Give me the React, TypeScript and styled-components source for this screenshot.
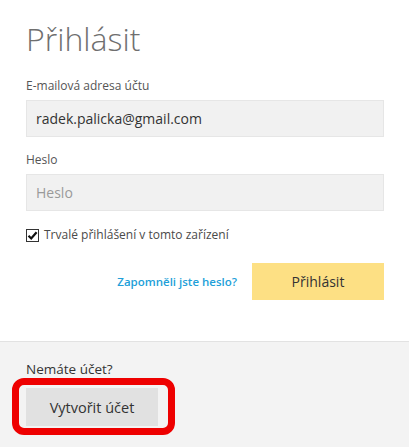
import styled, { createGlobalStyle } from 'styled-components';

const GlobalStyle = createGlobalStyle`
	html, body {
		margin: 0;
		padding: 0;
		background: #ffffff;
	}
	body {
		font-family: 'Open Sans', 'Noto Sans', sans-serif;
	}
`;

const CheckIcon = () => (
	<svg width="11" height="11" viewBox="0 0 11 11" aria-hidden="true">
		<path d="M1.5 5.8 L4.2 8.5 L9.6 2.2" fill="none" stroke="#111" strokeWidth="2.2" />
	</svg>
);

export default function App() {
	return (
		<Page>
			<GlobalStyle />
			<SignInSection>
				<Title>Přihlásit</Title>

				<Field $top={19}>
					<FieldLabel>E-mailová adresa účtu</FieldLabel>
					<TextInput type="email" defaultValue="radek.palicka@gmail.com" />
				</Field>

				<Field $top={15}>
					<FieldLabel>Heslo</FieldLabel>
					<TextInput type="password" placeholder="Heslo" />
				</Field>

				<RememberRow>
					<CheckBox>
						<CheckIcon />
					</CheckBox>
					<RememberText>Trvalé přihlášení v tomto zařízení</RememberText>
				</RememberRow>

				<ActionRow>
					<ForgotLink href="#">Zapomněli jste heslo?</ForgotLink>
					<PrimaryButton type="button">Přihlásit</PrimaryButton>
				</ActionRow>
			</SignInSection>

			<SignUpSection>
				<SignUpText>Nemáte účet?</SignUpText>
				<Highlight>
					<SecondaryButton type="button">Vytvořit účet</SecondaryButton>
					<HighlightRing />
				</Highlight>
			</SignUpSection>
		</Page>
	);
}

const Page = styled.div`
	width: 409px;
	height: 447px;
	display: flex;
	flex-direction: column;
	overflow: hidden;
`;

const SignInSection = styled.section`
	display: flex;
	flex-direction: column;
	padding: 19px 25px 41px 26px;
`;

const Title = styled.h1`
	margin: 0;
	font-size: 32px;
	line-height: 40px;
	font-weight: 300;
	color: #6f6f6f;
`;

const Field = styled.div<{ $top: number }>`
	display: flex;
	flex-direction: column;
	gap: 6px;
	margin-top: ${({ $top }) => $top}px;
`;

const FieldLabel = styled.label`
	font-size: 12px;
	line-height: 16px;
	color: #555555;
`;

const TextInput = styled.input`
	box-sizing: border-box;
	height: 37px;
	width: 100%;
	margin: 0;
	padding: 0 9px;
	border: 1px solid #e6e6e6;
	background: #f1f1f1;
	font-family: inherit;
	font-size: 14px;
	color: #333333;
	outline: none;

	&::placeholder {
		color: #9a9a9a;
	}
`;

const RememberRow = styled.div`
	display: flex;
	align-items: center;
	gap: 5px;
	margin-top: 17px;
	height: 14px;
`;

const CheckBox = styled.span`
	box-sizing: border-box;
	width: 13px;
	height: 13px;
	border: 1px solid #333333;
	background: #ffffff;
	display: flex;
	align-items: center;
	justify-content: center;
`;

const RememberText = styled.span`
	font-size: 12px;
	line-height: 14px;
	color: #4a4a4a;
`;

const ActionRow = styled.div`
	display: flex;
	justify-content: flex-end;
	align-items: center;
	gap: 15px;
	margin-top: 21px;
`;

const ForgotLink = styled.a`
	font-size: 11.5px;
	font-weight: 600;
	color: #229fd9;
	text-decoration: none;
`;

const PrimaryButton = styled.button`
	width: 132px;
	height: 37px;
	margin: 0;
	border: none;
	background: #fde084;
	font-family: inherit;
	font-size: 14px;
	color: #333333;
	cursor: pointer;
`;

const SignUpSection = styled.section`
	flex: 1;
	display: flex;
	flex-direction: column;
	align-items: flex-start;
	padding: 17px 25px 20px 26px;
	background: #f3f3f3;
	border-top: 1px solid #e2e2e2;
`;

const SignUpText = styled.p`
	margin: 0 0 9px;
	font-size: 13.5px;
	line-height: 20px;
	color: #333333;
`;

const Highlight = styled.span`
	position: relative;
	display: inline-flex;
`;

const SecondaryButton = styled.button`
	width: 132px;
	height: 38px;
	margin: 0;
	border: none;
	background: #e1e1e1;
	font-family: inherit;
	font-size: 14.5px;
	color: #333333;
	cursor: pointer;
`;

const HighlightRing = styled.span`
	position: absolute;
	left: -14px;
	top: -10px;
	right: -17px;
	bottom: -9px;
	border: 7px solid #ee0000;
	border-radius: 12px;
	pointer-events: none;
`;
